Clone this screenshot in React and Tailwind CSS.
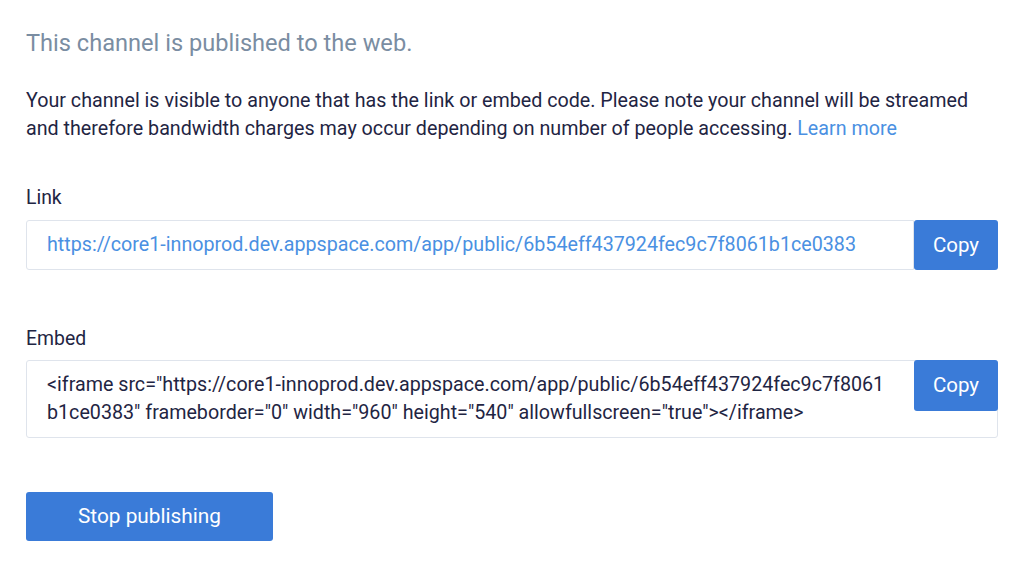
export default function App() {
  return (
    <div className="w-[1024px] h-[573px] bg-white overflow-hidden font-['Roboto',sans-serif]">
      <div className="pl-[26px] pr-[26px] pt-[29px]">
        <h1 className="text-[23.6px] leading-[28px] text-[#7a8da2] font-normal">
          This channel is published to the web.
        </h1>
        <p className="mt-[30px] text-[19.7px] leading-[28px] text-[#1f2543]">
          Your channel is visible to anyone that has the link or embed code. Please note your channel will be streamed and therefore bandwidth charges may occur depending on number of people accessing.{" "}
          <a className="text-[#4a90e2]">Learn more</a>
        </p>

        <div className="mt-[43px] text-[19.4px] leading-[24px] text-[#1f2543]">Link</div>
        <div className="mt-[10px] flex w-[972px] h-[50px]">
          <div className="flex-1 flex items-center border border-[#dfe4ec] rounded-l-[3px] pl-[20px] text-[19.7px] text-[#4a90e2] whitespace-nowrap">
            https://core1-innoprod.dev.appspace.com/app/public/6b54eff437924fec9c7f8061b1ce0383
          </div>
          <button className="w-[84px] h-[50px] bg-[#3a7bd8] text-white text-[20.5px] rounded-[3px]">
            Copy
          </button>
        </div>

        <div className="mt-[57px] text-[19.4px] leading-[24px] text-[#1f2543]">Embed</div>
        <div className="mt-[9px] relative w-[972px] h-[78px] border border-[#dfe4ec] rounded-[3px]">
          <div className="pl-[20px] pt-[10px] text-[19.7px] leading-[28px] text-[#1f2543] whitespace-nowrap">
            &lt;iframe src="https://core1-innoprod.dev.appspace.com/app/public/6b54eff437924fec9c7f8061
            <br />
            b1ce0383" frameborder="0" width="960" height="540" allowfullscreen="true"&gt;&lt;/iframe&gt;
          </div>
          <button className="absolute top-[-1px] right-[-1px] w-[84px] h-[51px] bg-[#3a7bd8] text-white text-[20.5px] rounded-[3px]">
            Copy
          </button>
        </div>

        <button className="mt-[54px] w-[247px] h-[49px] bg-[#3a7bd8] text-white text-[20.8px] rounded-[3px]">
          Stop publishing
        </button>
      </div>
    </div>
  );
}
